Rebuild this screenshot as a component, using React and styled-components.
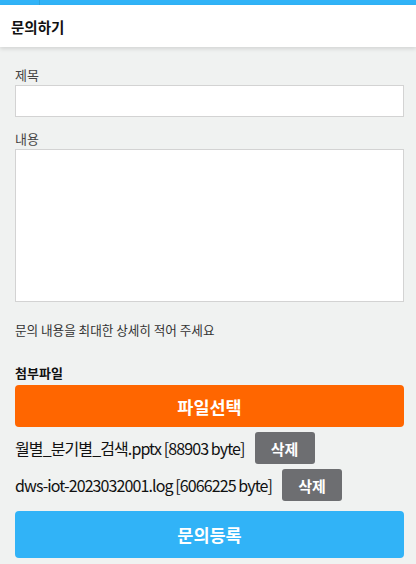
import React from 'react'
import styled, { createGlobalStyle } from 'styled-components'

const COLOR_BLUE = '#31b3f7'
const COLOR_ORANGE = '#ff6600'
const COLOR_GREY = '#6d6e71'
const COLOR_BG = '#f0f2f1'
const COLOR_BORDER = '#d3d3d3'

const GlobalStyle = createGlobalStyle`
    html, body {
        margin: 0;
        padding: 0;
        background: ${COLOR_BG};
    }
    body {
        font-family: "Noto Sans CJK KR", "Noto Sans", sans-serif;
        color: #222;
    }
    * {
        box-sizing: border-box;
    }
`

const TopBar = styled.div`
    background: ${COLOR_BLUE};
    display: flex;
    height: 5px;
`

const TopTab = styled.div`
    border-right: 1px solid #2aa3e0;
    width: 40px;
`

const Header = styled.header`
    align-items: center;
    background: #fff;
    box-shadow: 0 2px 4px rgba(0, 0, 0, .12);
    display: flex;
    height: 42px;
    padding-left: 11px;
    position: relative;
`

const Title = styled.h1`
    color: #111;
    font-size: 14.5px;
    font-weight: 700;
    margin: 0;
`

const Form = styled.form`
    display: flex;
    flex-direction: column;
    padding: 18px 12px 6px 15px;
`

const Label = styled.label`
    color: #444;
    font-size: 13px;
    line-height: 20px;
    margin-top: ${p => p.$top || 0}px;
`

const TextInput = styled.input`
    background: #fff;
    border: 1px solid ${COLOR_BORDER};
    border-radius: 0;
    height: 32px;
    outline: none;
    padding: 0 8px;
    width: 100%;
`

const TextArea = styled.textarea`
    background: #fff;
    border: 1px solid ${COLOR_BORDER};
    display: block;
    height: 153px;
    outline: none;
    resize: none;
    width: 100%;
`

const Help = styled.p`
    color: #333;
    font-size: 12.6px;
    line-height: 20px;
    margin: 18px 0 0;
`

const SectionTitle = styled.h2`
    color: #111;
    font-size: 13px;
    font-weight: 700;
    line-height: 20px;
    margin: 23px 0 2px;
`

const Button = styled.button`
    background: ${p => p.$color};
    border: none;
    border-radius: 4px;
    color: #fff;
    font-family: inherit;
    font-size: 17.5px;
    font-weight: 700;
    height: ${p => p.$height}px;
    width: 100%;
`

const FileList = styled.ul`
    display: flex;
    flex-direction: column;
    gap: 5px;
    list-style: none;
    margin: 5px 0 10px;
    padding: 0;
`

const FileRow = styled.li`
    align-items: center;
    display: flex;
    gap: 10px;
`

const FileName = styled.span`
    color: #111;
    font-size: 16px;
    letter-spacing: -0.9px;
`

const DeleteButton = styled.button`
    background: ${COLOR_GREY};
    border: none;
    border-radius: 3px;
    color: #fff;
    font-family: inherit;
    font-size: 15px;
    font-weight: 700;
    height: 32px;
    width: 60px;
`

const files = [
    { name: '월별_분기별_검색.pptx', size: 88903 },
    { name: 'dws-iot-2023032001.log', size: 6066225 },
]

const App = () => {
    return (
        <>
            <GlobalStyle />
            <TopBar>
                <TopTab />
            </TopBar>
            <Header>
                <Title>문의하기</Title>
            </Header>
            <Form onSubmit={e => e.preventDefault()}>
                <Label htmlFor='subject'>제목</Label>
                <TextInput id='subject' type='text' />
                <Label htmlFor='content' $top={12}>내용</Label>
                <TextArea id='content' />
                <Help>문의 내용을 최대한 상세히 적어 주세요</Help>
                <SectionTitle>첨부파일</SectionTitle>
                <Button type='button' $color={COLOR_ORANGE} $height={42}>파일선택</Button>
                <FileList>
                    {files.map(f => (
                        <FileRow key={f.name}>
                            <FileName>{f.name} [{f.size} byte]</FileName>
                            <DeleteButton type='button'>삭제</DeleteButton>
                        </FileRow>
                    ))}
                </FileList>
                <Button type='submit' $color={COLOR_BLUE} $height={47}>문의등록</Button>
            </Form>
        </>
    )
}

export default App
